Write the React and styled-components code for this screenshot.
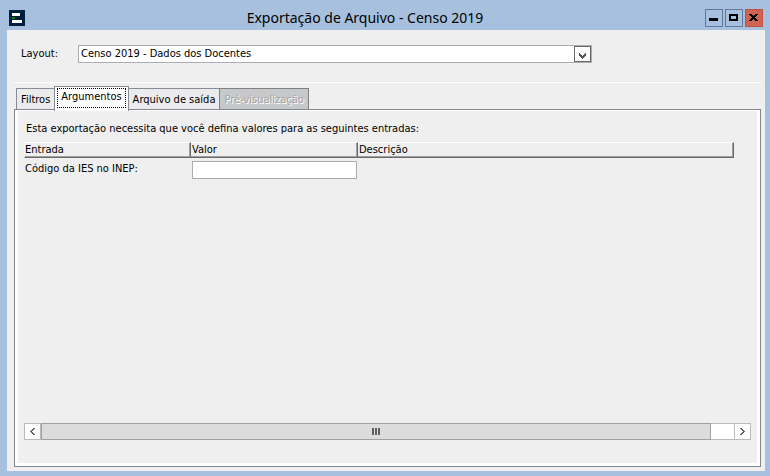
import { useState } from "react";
import styled, { createGlobalStyle } from "styled-components";

const GlobalStyle = createGlobalStyle`
  * {
    box-sizing: border-box;
  }

  body {
    margin: 0;
    background: #a6c0dd;
  }

  body, button, input, select {
    font-family: "DejaVu Sans Condensed", "DejaVu Sans", sans-serif;
    font-size: 11px;
    color: #000000;
  }
`;

const Window = styled.div`
  display: flex;
  flex-direction: column;
  min-height: 100vh;
  padding: 0 5px 5px 7px;
  background: #a6c0dd;
`;

const TitleBar = styled.header`
  display: grid;
  grid-template-columns: 16px 1fr 58px;
  align-items: center;
  height: 30px;
  padding: 6px 2px 0 2px;
`;

const Title = styled.h1`
  margin: 0;
  font-family: "Noto Sans", "Open Sans", sans-serif;
  font-size: 14px;
  line-height: 20px;
  font-weight: normal;
  text-align: center;
  white-space: nowrap;
`;

const WindowButtons = styled.div`
  display: flex;
  gap: 2px;
`;

const WindowButton = styled.button`
  display: flex;
  width: 18px;
  height: 18px;
  padding: 0;
  border: 1px solid ${(props) => (props.$close ? "#c0504a" : "#62779a")};
  background: ${(props) => (props.$close ? "#cd6550" : "#a6c0dd")};
`;

const Content = styled.main`
  flex: 1;
  display: flex;
  flex-direction: column;
  padding: 15px 4px 4px 7px;
  background: #efefef;
`;

const LayoutRow = styled.div`
  display: flex;
  align-items: center;
  padding: 0 7px;
`;

const LayoutLabel = styled.label`
  flex: 0 0 57px;
  line-height: 18px;
`;

const SelectBox = styled.div`
  position: relative;
  flex: 0 1 514px;

  select {
    display: block;
    appearance: none;
    width: 100%;
    height: 18px;
    padding: 0 18px 1px 2px;
    border: 1px solid #abadb3;
    border-radius: 0;
    background: #ffffff;
    outline: none;
  }

  svg {
    position: absolute;
    top: 1px;
    right: 1px;
    pointer-events: none;
  }
`;

const Separator = styled.hr`
  width: 100%;
  margin: 18px 0 4px;
  border: 0;
  border-top: 1px solid #ebebeb;
  border-bottom: 1px solid #ffffff;
`;

const TabList = styled.div`
  display: flex;
  align-items: flex-end;
  height: 22px;
  padding-left: 2px;
`;

const Tab = styled.button`
  height: 21px;
  padding: 0 4px;
  border: 1px solid #898c95;
  border-bottom: 0;
  border-radius: 0;
  margin-right: -1px;
  background: #ebebed;
  white-space: nowrap;
  outline: none;

  &[aria-selected="true"] {
    position: relative;
    height: 25px;
    margin-bottom: -2px;
    padding: 1px 2px 3px;
    background: #ffffff;
  }

  &[aria-selected="true"] span {
    display: block;
    height: 20px;
    padding: 0 3px;
    border: 1px dotted #000000;
    line-height: 16px;
  }

  &:disabled {
    border-color: #808080;
    background: #c6c8ca;
    color: #a5a5a5;
    text-shadow: 1px 1px 0 #ffffff;
  }
`;

const Panel = styled.section`
  flex: 1;
  display: flex;
  flex-direction: column;
  border: 1px solid #828790;
  padding: 1px 3px 3px;
  background: #ffffff;
`;

const PanelBody = styled.div`
  flex: 1;
  display: flex;
  flex-direction: column;
  padding: 10px 6px 23px;
  background: #efefef;
`;

const Message = styled.p`
  margin: 0 0 5px;
  padding-left: 2px;
  line-height: 16px;
`;

const Entries = styled.table`
  width: calc(100% - 17px);
  table-layout: fixed;
  border-collapse: separate;
  border-spacing: 0;
  text-align: left;

  th {
    height: 16px;
    padding: 0 0 0 1px;
    border-top: 1px solid #ffffff;
    border-right: 1px solid #696969;
    border-bottom: 1px solid #696969;
    box-shadow: inset -1px -1px 0 #a0a0a0;
    font-weight: normal;
    line-height: 14px;
  }

  th:first-child {
    border-left: 1px solid #ffffff;
    padding-left: 0;
  }

  td {
    padding: 3px 1px 0;
    line-height: 16px;
    vertical-align: top;
  }
`;

const EntryColumn = styled.col`
  width: 167px;
`;

const ValueInput = styled.input`
  display: block;
  width: 100%;
  height: 18px;
  padding: 0 2px;
  border: 1px solid #abadb3;
  background: #ffffff;
  outline: none;
`;

const ScrollBar = styled.div`
  display: flex;
  height: 17px;
  margin-top: auto;
`;

const ScrollButton = styled.button`
  display: flex;
  flex: 0 0 17px;
  padding: 0;
  border: 1px solid #bababa;
  background: #ffffff;
`;

const ScrollTrack = styled.div`
  flex: 1;
  padding-right: 23px;
  border: solid #bababa;
  border-width: 1px 0;
  background: #ffffff;
`;

const ScrollThumb = styled.div`
  display: flex;
  align-items: center;
  justify-content: center;
  height: 17px;
  margin: -1px 0;
  border: 1px solid #a0a0a0;
  background: #dcdcdc;
`;

const AppIcon = () => (
  <svg width="16" height="16" viewBox="0 0 16 16" shapeRendering="crispEdges">
    <path d="M0 0h16v16H0z" fill="#001f3d" />
    <path d="M3 3h8v3H3zM3 10h10v3H3z" fill="#ffffff" />
    <path d="M3 7h3v2H3z" fill="#087a08" />
  </svg>
);

const windowIcons = {
  Minimizar: "M3 8h9v3H3z",
  Maximizar: "M3 4h9v7H3zM5 6v3h5V6z",
  Fechar:
    "M3 4h3v1h1v1h1V5h1V4h3v1h-1v1h-1v1H9v1h1v1h1v1h1v1H9v-1H8V9H7v1H6v1H3v-1h1V9h1V8h1V7H5V6H4V5H3z",
};

const WindowControl = ({ name }) => (
  <WindowButton type="button" aria-label={name} $close={name === "Fechar"}>
    <svg width="16" height="16" viewBox="0 0 16 16" shapeRendering="crispEdges">
      <path d={windowIcons[name]} fillRule="evenodd" />
    </svg>
  </WindowButton>
);

const DropArrow = () => (
  <svg width="17" height="16" viewBox="0 0 17 16" shapeRendering="crispEdges">
    <path d="M.5.5h16v15H.5z" fill="#ffffff" stroke="#696969" />
    <path
      d="M5 7h1v1h1v1h1v1h1V9h1V8h1V7h1v3h-1v1h-1v1H9v1H8v-1H7v-1H6v-1H5z"
      fill="#555555"
    />
  </svg>
);

const ScrollArrow = ({ d }) => (
  <svg width="15" height="15" viewBox="0 0 15 15" shapeRendering="crispEdges">
    <path d={d} fill="#606060" />
  </svg>
);

const tabs = [
  { id: "filtros", label: "Filtros" },
  { id: "argumentos", label: "Argumentos" },
  { id: "arquivo", label: "Arquivo de saída" },
  { id: "previa", label: "Pré-visualização", disabled: true },
];

const App = () => {
  const [activeTab, setActiveTab] = useState("argumentos");
  const [codigo, setCodigo] = useState("");

  return (
    <>
      <GlobalStyle />
      <Window>
        <TitleBar>
          <AppIcon />
          <Title>Exportação de Arquivo - Censo 2019</Title>
          <WindowButtons>
            <WindowControl name="Minimizar" />
            <WindowControl name="Maximizar" />
            <WindowControl name="Fechar" />
          </WindowButtons>
        </TitleBar>

        <Content>
          <LayoutRow>
            <LayoutLabel htmlFor="layout">Layout:</LayoutLabel>
            <SelectBox>
              <select id="layout">
                <option>Censo 2019 - Dados dos Docentes</option>
              </select>
              <DropArrow />
            </SelectBox>
          </LayoutRow>
          <Separator />

          <TabList role="tablist">
            {tabs.map((tab) => (
              <Tab
                key={tab.id}
                type="button"
                role="tab"
                aria-selected={activeTab === tab.id}
                disabled={tab.disabled}
                onClick={() => setActiveTab(tab.id)}
              >
                <span>{tab.label}</span>
              </Tab>
            ))}
          </TabList>

          <Panel role="tabpanel">
            <PanelBody>
              {activeTab === "argumentos" && (
                <>
                  <Message>
                    Esta exportação necessita que você defina valores para as
                    seguintes entradas:
                  </Message>
                  <Entries>
                    <colgroup>
                      <EntryColumn />
                      <EntryColumn />
                      <col />
                    </colgroup>
                    <thead>
                      <tr>
                        <th>Entrada</th>
                        <th>Valor</th>
                        <th>Descrição</th>
                      </tr>
                    </thead>
                    <tbody>
                      <tr>
                        <td>
                          <label htmlFor="codigo">Código da IES no INEP:</label>
                        </td>
                        <td>
                          <ValueInput
                            id="codigo"
                            type="text"
                            value={codigo}
                            onChange={(e) => setCodigo(e.target.value)}
                          />
                        </td>
                        <td />
                      </tr>
                    </tbody>
                  </Entries>
                </>
              )}
              <ScrollBar>
                <ScrollButton type="button" aria-label="Rolar para a esquerda">
                  <ScrollArrow d="M8 4h2v1H9v1H8v1H7v1h1v1h1v1h1v1H8v-1H7V9H6V8H5V7h1V6h1V5h1z" />
                </ScrollButton>
                <ScrollTrack>
                  <ScrollThumb>
                    <svg width="8" height="7" viewBox="0 0 8 7" shapeRendering="crispEdges">
                      <path d="M0 0h2v7H0zM3 0h2v7H3zM6 0h2v7H6z" fill="#606060" />
                    </svg>
                  </ScrollThumb>
                </ScrollTrack>
                <ScrollButton type="button" aria-label="Rolar para a direita">
                  <ScrollArrow d="M5 4h2v1h1v1h1v1h1v1H9v1H8v1H7v1H5v-1h1V9h1V8h1V7H7V6H6V5H5z" />
                </ScrollButton>
              </ScrollBar>
            </PanelBody>
          </Panel>
        </Content>
      </Window>
    </>
  );
};

export default App;
